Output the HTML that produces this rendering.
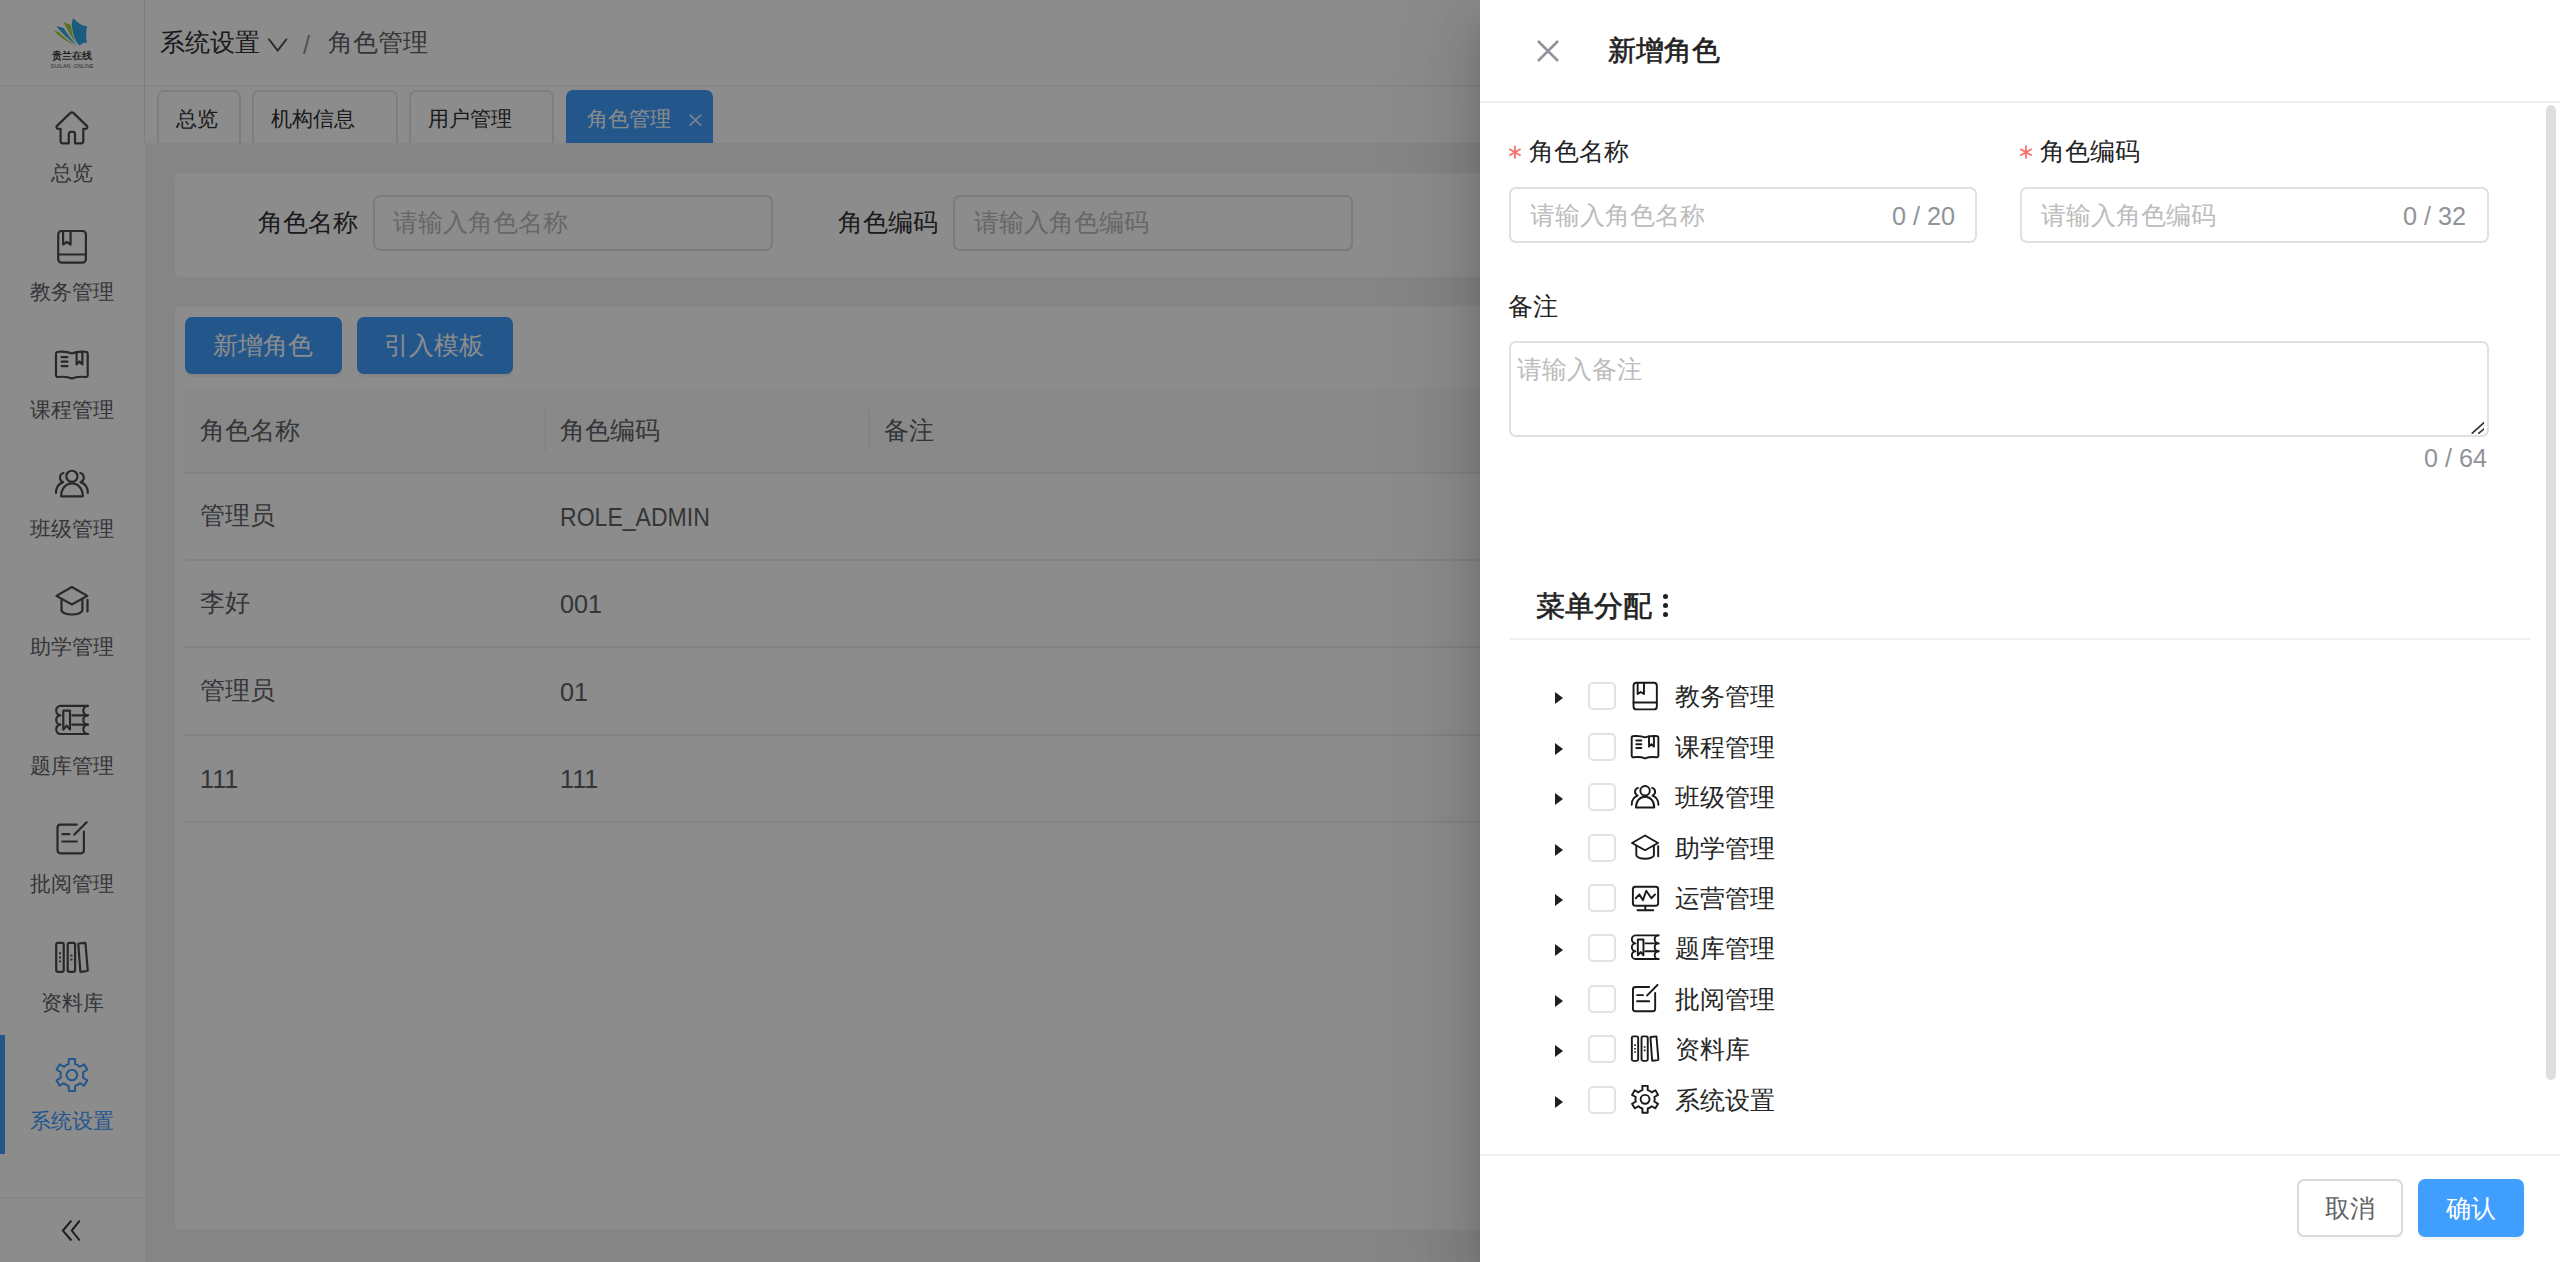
<!DOCTYPE html>
<html><head><meta charset="utf-8">
<style>
*{box-sizing:border-box;margin:0;padding:0}
html,body{width:2560px;height:1262px;overflow:hidden;background:#fff;font-family:"Liberation Sans",sans-serif}
.a{position:absolute}
.t{position:absolute;white-space:nowrap;line-height:40px;height:40px}
#page{position:absolute;left:0;top:0;width:2560px;height:1262px;background:#fff}
#sidebar{left:0;top:0;width:145px;height:1262px;background:#fff}
#header{left:145px;top:0;width:2415px;height:86px;background:#fff;border-bottom:1px solid #ececec}
#tabsbar{left:145px;top:86px;width:2415px;height:57px;background:#fff}
#content{left:145px;top:143px;width:2415px;height:1119px;background:#f2f3f5}
.card{background:#fff;border-radius:6px}
.tab{position:absolute;top:90px;height:53px;border:2px solid #e6e6e6;border-bottom:none;border-radius:7px 7px 0 0;background:#fff}
.tab .t{font-size:21.6px;color:#303133;top:7px}
.inp{position:absolute;border:2px solid #e0e0e0;border-radius:7px;background:#fff}
.ph{color:#bcbcbc}
.btn{position:absolute;border-radius:7px;background:#409eff;box-shadow:0 3px 0 rgba(0,0,0,.045)}
.sb-i{position:absolute;left:0;width:144px}
.sb-txt{position:absolute;left:0;width:144px;text-align:center;font-size:21.2px;color:#606266;line-height:40px;height:40px}
.th{font-size:24.7px;color:#606266}
.td{font-size:25.2px;color:#606266}
#mask{left:0;top:0;width:1480px;height:1262px;background:rgba(0,0,0,.45)}
#drawer{left:1480px;top:0;width:1080px;height:1262px;background:#fff;box-shadow:0 29px 86px 29px rgba(0,0,0,.08),0 22px 58px rgba(0,0,0,.12),0 14px 29px -14px rgba(0,0,0,.16)}
.lbl{font-size:24.7px;color:#222}
.star{color:#f56c6c;font-size:25.2px}
.cnt{font-size:25.2px;color:#909399}
.tr-txt{font-size:24.7px;color:#262626}
.cb{position:absolute;width:28px;height:28px;border:2px solid #e2e2e2;border-radius:5px;background:#fff}
.tri{position:absolute;width:0;height:0;border-top:6.5px solid transparent;border-bottom:6.5px solid transparent;border-left:8px solid #1f1f1f}
.ic{position:absolute;fill:none;stroke-linecap:round;stroke-linejoin:round}
</style></head><body>
<svg width="0" height="0" style="position:absolute"><defs>
<symbol id="i-home" viewBox="0 0 36 36"><path d="M6.6 31V18.8H4.2C2.6 18.8 1.9 17 3 15.9L15.9 3.4C17 2.3 18.8 2.3 19.9 3.4L32.8 15.9C33.9 17 33.2 18.8 31.6 18.8H29.3V31C29.3 32.3 28.3 33.3 27 33.3H21V24C21 22.8 20.1 21.9 19 21.9H16.8C15.7 21.9 14.8 22.8 14.8 24V33.3H8.9C7.6 33.3 6.6 32.3 6.6 31Z"/></symbol>
<symbol id="i-book" viewBox="0 0 36 36"><rect x="4.2" y="2" width="27.7" height="31.7" rx="3.5"/><path d="M9.1 2.5V15.5L12.85 13L16.6 15.5V2.5"/><path d="M4.2 25.5H31.9"/></symbol>
<symbol id="i-open" viewBox="0 0 36 36"><path d="M2 7C2 5.5 3 4.75 4.5 4.75C9 4.5 13.5 4.5 17.9 6.5C22.3 4.5 26.8 4.5 31.2 4.75C32.7 4.75 33.7 5.5 33.7 7V28C33.7 29.5 32.7 30.2 31.2 30C26.8 29.5 22.3 29.5 17.9 31.4C13.5 29.5 9 29.5 4.5 30C3 30.2 2 29.5 2 28Z"/><path d="M7.5 10.1H13.5M7.5 14.6H13.5M7.5 19.1H13.5"/><path d="M22.6 5V17.4L25.5 14.5L28.4 17.4V5"/></symbol>
<symbol id="i-users" viewBox="0 0 36 36"><circle cx="17.9" cy="10.35" r="5.6"/><path d="M7.1 30.3C7.1 22.5 11.9 17.45 17.95 17.45C24 17.45 28.8 22.5 28.8 30.3Z"/><path d="M9.5 7C7.3 7.6 6 9.4 6 11.7C6 13.8 7.3 15.4 9.1 16.1C4.9 17.6 2 21.8 2 27"/><path d="M26.3 7C28.5 7.6 29.8 9.4 29.8 11.7C29.8 13.8 28.5 15.4 26.7 16.1C30.9 17.6 33.8 21.8 33.8 27"/></symbol>
<symbol id="i-cap" viewBox="0 0 36 36"><path d="M17.9 3L33.3 11.85L17.9 20.5L2.4 11.85Z"/><path d="M7.5 15.2V26C7.5 28.5 12 30.5 17.9 30.5C23.8 30.5 28.4 28.5 28.4 26V15.2"/><path d="M33.5 15.8V27.6"/></symbol>
<symbol id="i-qbank" viewBox="0 0 36 36"><path d="M33.9 2.8H6.4A4.2 4.775 0 0 0 6.4 12.35A4.2 4.675 0 0 0 6.4 21.7A4.2 4.65 0 0 0 6.4 31H33.9"/><path d="M33.9 2.8A4.6 4.775 0 0 0 33.9 12.35A4.6 4.675 0 0 0 33.9 21.7A4.6 4.65 0 0 0 33.9 31"/><path d="M9.3 7.7H16V26.5L12.65 22.6L9.3 26.5Z"/><path d="M18.4 12.35H33.9M18.4 21.7H33.9"/></symbol>
<symbol id="i-review" viewBox="0 0 36 36"><path d="M22.8 3.6H6.5C4.8 3.6 3.5 4.9 3.5 6.6V29.3C3.5 31 4.8 32.3 6.5 32.3H26.9C28.6 32.3 29.9 31 29.9 29.3V10.7"/><path d="M20.4 13.6L32.6 1.2"/><path d="M8.4 13.2H15.5M8.4 20.5H22.8"/></symbol>
<symbol id="i-lib" viewBox="0 0 36 36"><rect x="2.2" y="2.8" width="7.5" height="29.1" rx="1.8"/><rect x="13.7" y="2.8" width="7.4" height="29.1" rx="1.8"/><path d="M24.8 3.5L31 2.8C31.3 2.8 31.5 3 31.5 3.3L33.7 30.2C33.7 30.6 33.5 30.9 33.1 31L27 31.8C26.6 31.8 26.3 31.6 26.3 31.2L24.3 4.1C24.3 3.8 24.5 3.5 24.8 3.5Z"/><path d="M5 13.2H7M5 17.45H7M5 21.4H7M16.4 15.5H18.5M16.4 19.45H18.5" stroke-width="1.9" stroke-linecap="butt"/></symbol>
<symbol id="i-gear" viewBox="0 0 36 36"><path d="M14.75 6.04L14.75 1.00L21.05 1.00L21.05 6.04A11.4 11.4 0 0 1 25.81 8.79L30.18 6.27L33.33 11.73L28.96 14.25A11.4 11.4 0 0 1 28.96 19.75L33.33 22.27L30.18 27.73L25.81 25.21A11.4 11.4 0 0 1 21.05 27.96L21.05 33.00L14.75 33.00L14.75 27.96A11.4 11.4 0 0 1 9.99 25.21L5.62 27.73L2.47 22.27L6.84 19.75A11.4 11.4 0 0 1 6.84 14.25L2.47 11.73L5.62 6.27L9.99 8.79A11.4 11.4 0 0 1 14.75 6.04Z"/><circle cx="17.9" cy="17" r="5.3"/></symbol>
<symbol id="i-monitor" viewBox="0 0 36 36"><rect x="3.45" y="4.5" width="30" height="22.6" rx="3"/><path d="M18.2 27.1V32.4M8.9 32.4H27.6"/><path d="M6.9 18.1L11.2 13.6L15.4 20.4L19.3 9.2L25.4 18.1L29.8 13.6"/></symbol>
</defs></svg>
<div id="page">
  <div id="sidebar" class="a"></div>
  <div id="header" class="a"></div>
  <div class="a" style="left:144px;top:0;width:1px;height:143px;background:#e6e6e6"></div>
  <div id="tabsbar" class="a"></div>
  <div id="content" class="a"></div>
  <!-- search card -->
  <div class="a card" style="left:175px;top:173px;width:2360px;height:104px"></div>
  <!-- table card -->
  <div class="a card" style="left:175px;top:306px;width:2360px;height:924px"></div>
  <svg class="ic" style="left:54px;top:110.0px;stroke:#4a4a4a;stroke-width:2.2" width="36" height="36"><use href="#i-home"/></svg>
  <div class="sb-txt" style="top:153.0px;color:#606266">总览</div>
  <svg class="ic" style="left:54px;top:228.5px;stroke:#4a4a4a;stroke-width:2.2" width="36" height="36"><use href="#i-book"/></svg>
  <div class="sb-txt" style="top:271.5px;color:#606266">教务管理</div>
  <svg class="ic" style="left:54px;top:347.0px;stroke:#4a4a4a;stroke-width:2.2" width="36" height="36"><use href="#i-open"/></svg>
  <div class="sb-txt" style="top:390.0px;color:#606266">课程管理</div>
  <svg class="ic" style="left:54px;top:465.5px;stroke:#4a4a4a;stroke-width:2.2" width="36" height="36"><use href="#i-users"/></svg>
  <div class="sb-txt" style="top:508.5px;color:#606266">班级管理</div>
  <svg class="ic" style="left:54px;top:584.0px;stroke:#4a4a4a;stroke-width:2.2" width="36" height="36"><use href="#i-cap"/></svg>
  <div class="sb-txt" style="top:627.0px;color:#606266">助学管理</div>
  <svg class="ic" style="left:54px;top:702.5px;stroke:#4a4a4a;stroke-width:2.2" width="36" height="36"><use href="#i-qbank"/></svg>
  <div class="sb-txt" style="top:745.5px;color:#606266">题库管理</div>
  <svg class="ic" style="left:54px;top:821.0px;stroke:#4a4a4a;stroke-width:2.2" width="36" height="36"><use href="#i-review"/></svg>
  <div class="sb-txt" style="top:864.0px;color:#606266">批阅管理</div>
  <svg class="ic" style="left:54px;top:939.5px;stroke:#4a4a4a;stroke-width:2.2" width="36" height="36"><use href="#i-lib"/></svg>
  <div class="sb-txt" style="top:982.5px;color:#606266">资料库</div>
  <svg class="ic" style="left:54px;top:1058.0px;stroke:#409eff;stroke-width:2" width="36" height="36"><use href="#i-gear"/></svg>
  <div class="sb-txt" style="top:1101.0px;color:#409eff">系统设置</div>
  <div class="a" style="left:0;top:1035px;width:5px;height:119px;background:#409eff"></div>
  <div class="a" style="left:0;top:1197px;width:144px;height:1px;background:#ececec"></div>
  <div class="a" style="left:0;top:85px;width:144px;height:1px;background:#ececec"></div>
  <div class="t " style="left:160px;top:23.0px;line-height:40px;height:40px;font-size:24.7px;color:#303133">系统设置</div>
  <div class="t " style="left:303px;top:25.0px;line-height:40px;height:40px;font-size:25.2px;color:#909399">/</div>
  <div class="t " style="left:328px;top:23.0px;line-height:40px;height:40px;font-size:24.7px;color:#606266">角色管理</div>
  <div class="tab" style="left:157px;width:84px"></div>
  <div class="t " style="left:176px;top:99.0px;line-height:40px;height:40px;font-size:21.2px;color:#303133">总览</div>
  <div class="tab" style="left:252px;width:146px"></div>
  <div class="t " style="left:271px;top:99.0px;line-height:40px;height:40px;font-size:21.2px;color:#303133">机构信息</div>
  <div class="tab" style="left:409px;width:145px"></div>
  <div class="t " style="left:428px;top:99.0px;line-height:40px;height:40px;font-size:21.2px;color:#303133">用户管理</div>
  <div class="a" style="left:566px;top:90px;width:147px;height:53px;background:#409eff;border-radius:7px 7px 0 0"></div>
  <div class="t " style="left:587px;top:99.0px;line-height:40px;height:40px;font-size:21.2px;color:#fff">角色管理</div>
  <div class="t " style="left:258px;top:202.5px;line-height:40px;height:40px;font-size:24.7px;color:#303133">角色名称</div>
  <div class="inp" style="left:373px;top:195px;width:400px;height:56px"></div>
  <div class="t ph" style="left:393px;top:202.5px;line-height:40px;height:40px;font-size:24.7px">请输入角色名称</div>
  <div class="t " style="left:838px;top:202.5px;line-height:40px;height:40px;font-size:24.7px;color:#303133">角色编码</div>
  <div class="inp" style="left:953px;top:195px;width:400px;height:56px"></div>
  <div class="t ph" style="left:974px;top:202.5px;line-height:40px;height:40px;font-size:24.7px">请输入角色编码</div>
  <div class="btn" style="left:185px;top:317px;width:157px;height:57px"></div>
  <div class="t " style="left:213px;top:326.0px;line-height:40px;height:40px;font-size:24.7px;color:#fff">新增角色</div>
  <div class="btn" style="left:357px;top:317px;width:156px;height:57px"></div>
  <div class="t " style="left:384px;top:326.0px;line-height:40px;height:40px;font-size:24.7px;color:#fff">引入模板</div>
  <div class="a" style="left:185px;top:389px;width:2350px;height:83px;background:#fafafa"></div>
  <div class="a" style="left:544px;top:410px;width:2px;height:41px;background:#efefef"></div>
  <div class="a" style="left:868px;top:410px;width:2px;height:41px;background:#efefef"></div>
  <div class="t th" style="left:200px;top:410.5px;line-height:40px;height:40px;">角色名称</div>
  <div class="t th" style="left:560px;top:410.5px;line-height:40px;height:40px;">角色编码</div>
  <div class="t th" style="left:884px;top:410.5px;line-height:40px;height:40px;">备注</div>
  <div class="a" style="left:185px;top:472px;width:2350px;height:2px;background:#efefef"></div>
  <div class="a" style="left:185px;top:559px;width:2350px;height:2px;background:#efefef"></div>
  <div class="a" style="left:185px;top:646px;width:2350px;height:2px;background:#efefef"></div>
  <div class="a" style="left:185px;top:734px;width:2350px;height:2px;background:#efefef"></div>
  <div class="a" style="left:185px;top:821px;width:2350px;height:2px;background:#efefef"></div>
  <div class="t td" style="left:200px;top:496.0px;line-height:40px;height:40px;font-size:24.7px">管理员</div>
  <div class="t td" style="left:560px;top:497.0px;line-height:40px;height:40px;"><span style="display:inline-block;transform:scaleX(0.915);transform-origin:0 50%">ROLE_ADMIN</span></div>
  <div class="t td" style="left:200px;top:583.0px;line-height:40px;height:40px;font-size:24.7px">李好</div>
  <div class="t td" style="left:560px;top:584.0px;line-height:40px;height:40px;">001</div>
  <div class="t td" style="left:200px;top:670.5px;line-height:40px;height:40px;font-size:24.7px">管理员</div>
  <div class="t td" style="left:560px;top:671.5px;line-height:40px;height:40px;">01</div>
  <div class="t td" style="left:200px;top:759.0px;line-height:40px;height:40px;">111</div>
  <div class="t td" style="left:560px;top:759.0px;line-height:40px;height:40px;">111</div>
<svg class="a" style="left:52px;top:1206px" width="40" height="50" viewBox="0 0 40 50"><path d="M19.4 14.7L10.9 24.6L19.4 34.5M27.7 14.7L19.8 24.6L27.7 34.5" stroke="#333" stroke-width="2" fill="none"/></svg>
<svg class="a" style="left:260px;top:30px" width="36" height="30" viewBox="0 0 36 30"><path d="M8.6 8.75L17.7 20.7L26.8 8.75" stroke="#505256" stroke-width="2" fill="none"/></svg>
<svg class="a" style="left:686px;top:111px" width="20" height="20" viewBox="0 0 20 20"><path d="M3.6 3.7L15.3 14.7M15.3 3.7L3.6 14.7" stroke="#fff" stroke-opacity=".8" stroke-width="1.8" fill="none"/></svg>
<svg class="a" style="left:46px;top:14px" width="52" height="60" viewBox="46 14 52 60">
<path d="M73.3 18C72.2 20.5 71.6 23 71.9 25.9C72.3 30 73.3 34.2 74.5 37.8C75.7 40.6 77.3 43.2 79.3 45.4C81.5 43.5 84.2 42.7 87.1 42.5C86.4 39.5 86 36.8 86.2 34C86.3 31.2 86.6 28.6 87.1 26.1C84.3 26 81.5 25.2 79.3 23.5C77 22 75 20.2 73.3 18Z" fill="#2fa8e6"/>
<path d="M63.1 21.8C65.8 22.9 68.4 23.9 71 25.2C71.3 31.5 73.2 37.8 76.9 44C71.7 37.5 67.5 30 63.1 21.8Z" fill="#a0d040"/>
<path d="M56.2 26.1C58.6 26.6 61.2 27.3 63.6 28C67.4 34 71.2 39.5 76.4 44.9C68.8 40 61.8 33.5 56.2 26.1Z" fill="#2fa8e6"/>
<path d="M54.1 31.1C55.6 31.4 57.1 31.7 58.6 32.1C63.9 37.2 69.2 41.6 75.5 45.4C67.6 42.6 60.2 37.8 54.1 31.1Z" fill="#a0d040"/>
</svg>
<div class="t" style="left:50px;top:46px;width:44px;height:20px;line-height:20px;font-size:10px;color:#222;-webkit-text-stroke:0.2px #222;text-align:center;letter-spacing:-0.1px">贵兰在线</div>
<div class="t" style="left:48px;top:61px;width:48px;height:10px;line-height:10px;font-size:5.2px;color:#555;text-align:center;letter-spacing:0.1px">GUILAN&nbsp;&nbsp;ONLINE</div>
</div>
<div id="mask" class="a"></div>
<div id="drawer" class="a"></div>
<svg class="a" style="left:1536px;top:39px" width="24" height="24" viewBox="0 0 24 24"><path d="M2 2L22 22M22 2L2 22" stroke="#909399" stroke-width="2.6" fill="none"/></svg>
<div class="t " style="left:1608px;top:31px;line-height:40px;height:40px;font-size:28px;color:#222;-webkit-text-stroke:0.6px #222">新增角色</div>
<div class="a" style="left:1480px;top:101px;width:1080px;height:2px;background:#efefef"></div>
<svg class="a" style="left:1507px;top:144px" width="16" height="16" viewBox="0 0 16 16"><path d="M8 1.6V14.8M2.3 4.9L13.7 11.5M13.7 4.9L2.3 11.5" stroke="#f56c6c" stroke-width="1.7" fill="none"/></svg>
<div class="t lbl" style="left:1529px;top:132.0px;line-height:40px;height:40px;">角色名称</div>
<svg class="a" style="left:2018px;top:144px" width="16" height="16" viewBox="0 0 16 16"><path d="M8 1.6V14.8M2.3 4.9L13.7 11.5M13.7 4.9L2.3 11.5" stroke="#f56c6c" stroke-width="1.7" fill="none"/></svg>
<div class="t lbl" style="left:2040px;top:132.0px;line-height:40px;height:40px;">角色编码</div>
<div class="inp" style="left:1509px;top:187px;width:468px;height:56px"></div>
<div class="t ph" style="left:1530px;top:195.5px;line-height:40px;height:40px;font-size:24.7px">请输入角色名称</div>
<div class="t cnt" style="left:1892px;top:196.0px;line-height:40px;height:40px;">0 / 20</div>
<div class="inp" style="left:2020px;top:187px;width:469px;height:56px"></div>
<div class="t ph" style="left:2041px;top:195.5px;line-height:40px;height:40px;font-size:24.7px">请输入角色编码</div>
<div class="t cnt" style="left:2403px;top:196.0px;line-height:40px;height:40px;">0 / 32</div>
<div class="t lbl" style="left:1508px;top:287.0px;line-height:40px;height:40px;">备注</div>
<div class="inp" style="left:1509px;top:341px;width:980px;height:96px"></div>
<div class="t ph" style="left:1517px;top:350.0px;line-height:40px;height:40px;font-size:24.7px">请输入备注</div>
<svg class="a" style="left:2468px;top:418px" width="16" height="16" viewBox="0 0 16 16"><path d="M3.7 15.7L17.4 3.4M10.2 15.7L17.4 9.9" stroke="#303133" stroke-width="1.6" fill="none"/></svg>
<div class="t cnt" style="left:2424px;top:438.0px;line-height:40px;height:40px;">0 / 64</div>
<div class="t " style="left:1536px;top:586.0px;line-height:40px;height:40px;font-size:28.8px;color:#222;-webkit-text-stroke:0.6px #222">菜单分配</div>
<div class="a" style="left:1662.75px;top:593.65px;width:5.2px;height:5.2px;border-radius:50%;background:#1f1f1f"></div>
<div class="a" style="left:1662.75px;top:602.70px;width:5.2px;height:5.2px;border-radius:50%;background:#1f1f1f"></div>
<div class="a" style="left:1662.75px;top:611.70px;width:5.2px;height:5.2px;border-radius:50%;background:#1f1f1f"></div>
<div class="a" style="left:1509px;top:638px;width:1022px;height:2px;background:#efefef"></div>
<div class="tri" style="left:1555px;top:692.4px"></div>
<div class="cb" style="left:1588px;top:682.4px"></div>
<svg class="ic" style="left:1630px;top:681.4px;stroke:#1a1a1a;stroke-width:2.3" width="30.3" height="30.3" viewBox="0 0 36 36"><use href="#i-book"/></svg>
<div class="t tr-txt" style="left:1675px;top:677.4px;line-height:40px;height:40px;">教务管理</div>
<div class="tri" style="left:1555px;top:742.8px"></div>
<div class="cb" style="left:1588px;top:732.8px"></div>
<svg class="ic" style="left:1630px;top:731.8px;stroke:#1a1a1a;stroke-width:2.3" width="30.3" height="30.3" viewBox="0 0 36 36"><use href="#i-open"/></svg>
<div class="t tr-txt" style="left:1675px;top:727.8px;line-height:40px;height:40px;">课程管理</div>
<div class="tri" style="left:1555px;top:793.2px"></div>
<div class="cb" style="left:1588px;top:783.1999999999999px"></div>
<svg class="ic" style="left:1630px;top:782.2px;stroke:#1a1a1a;stroke-width:2.3" width="30.3" height="30.3" viewBox="0 0 36 36"><use href="#i-users"/></svg>
<div class="t tr-txt" style="left:1675px;top:778.1999999999999px;line-height:40px;height:40px;">班级管理</div>
<div class="tri" style="left:1555px;top:843.6px"></div>
<div class="cb" style="left:1588px;top:833.5999999999999px"></div>
<svg class="ic" style="left:1630px;top:832.6px;stroke:#1a1a1a;stroke-width:2.3" width="30.3" height="30.3" viewBox="0 0 36 36"><use href="#i-cap"/></svg>
<div class="t tr-txt" style="left:1675px;top:828.5999999999999px;line-height:40px;height:40px;">助学管理</div>
<div class="tri" style="left:1555px;top:894.0px"></div>
<div class="cb" style="left:1588px;top:884.0px"></div>
<svg class="ic" style="left:1630px;top:883.0px;stroke:#1a1a1a;stroke-width:2.3" width="30.3" height="30.3" viewBox="0 0 36 36"><use href="#i-monitor"/></svg>
<div class="t tr-txt" style="left:1675px;top:879.0px;line-height:40px;height:40px;">运营管理</div>
<div class="tri" style="left:1555px;top:944.4px"></div>
<div class="cb" style="left:1588px;top:934.4px"></div>
<svg class="ic" style="left:1630px;top:933.4px;stroke:#1a1a1a;stroke-width:2.3" width="30.3" height="30.3" viewBox="0 0 36 36"><use href="#i-qbank"/></svg>
<div class="t tr-txt" style="left:1675px;top:929.4px;line-height:40px;height:40px;">题库管理</div>
<div class="tri" style="left:1555px;top:994.8px"></div>
<div class="cb" style="left:1588px;top:984.8px"></div>
<svg class="ic" style="left:1630px;top:983.8px;stroke:#1a1a1a;stroke-width:2.3" width="30.3" height="30.3" viewBox="0 0 36 36"><use href="#i-review"/></svg>
<div class="t tr-txt" style="left:1675px;top:979.8px;line-height:40px;height:40px;">批阅管理</div>
<div class="tri" style="left:1555px;top:1045.2px"></div>
<div class="cb" style="left:1588px;top:1035.2px"></div>
<svg class="ic" style="left:1630px;top:1034.2px;stroke:#1a1a1a;stroke-width:2.3" width="30.3" height="30.3" viewBox="0 0 36 36"><use href="#i-lib"/></svg>
<div class="t tr-txt" style="left:1675px;top:1030.2px;line-height:40px;height:40px;">资料库</div>
<div class="tri" style="left:1555px;top:1095.6px"></div>
<div class="cb" style="left:1588px;top:1085.6px"></div>
<svg class="ic" style="left:1630px;top:1084.6px;stroke:#1a1a1a;stroke-width:2.3" width="30.3" height="30.3" viewBox="0 0 36 36"><use href="#i-gear"/></svg>
<div class="t tr-txt" style="left:1675px;top:1080.6px;line-height:40px;height:40px;">系统设置</div>
<div class="a" style="left:2546px;top:105px;width:10px;height:975px;border-radius:5px;background:#dddee0"></div>
<div class="a" style="left:1480px;top:1154px;width:1080px;height:2px;background:#efefef"></div>
<div class="a" style="left:2297px;top:1179px;width:106px;height:58px;border:2px solid #d9d9d9;border-radius:7px;background:#fff;box-shadow:0 3px 0 rgba(0,0,0,.02)"></div>
<div class="t " style="left:2325px;top:1189.0px;line-height:40px;height:40px;font-size:24.7px;color:#606266">取消</div>
<div class="a" style="left:2418px;top:1179px;width:106px;height:58px;border-radius:7px;background:#409eff;box-shadow:0 3px 0 rgba(0,0,0,.045)"></div>
<div class="t " style="left:2446px;top:1189.0px;line-height:40px;height:40px;font-size:24.7px;color:#fff">确认</div>
</body></html>
